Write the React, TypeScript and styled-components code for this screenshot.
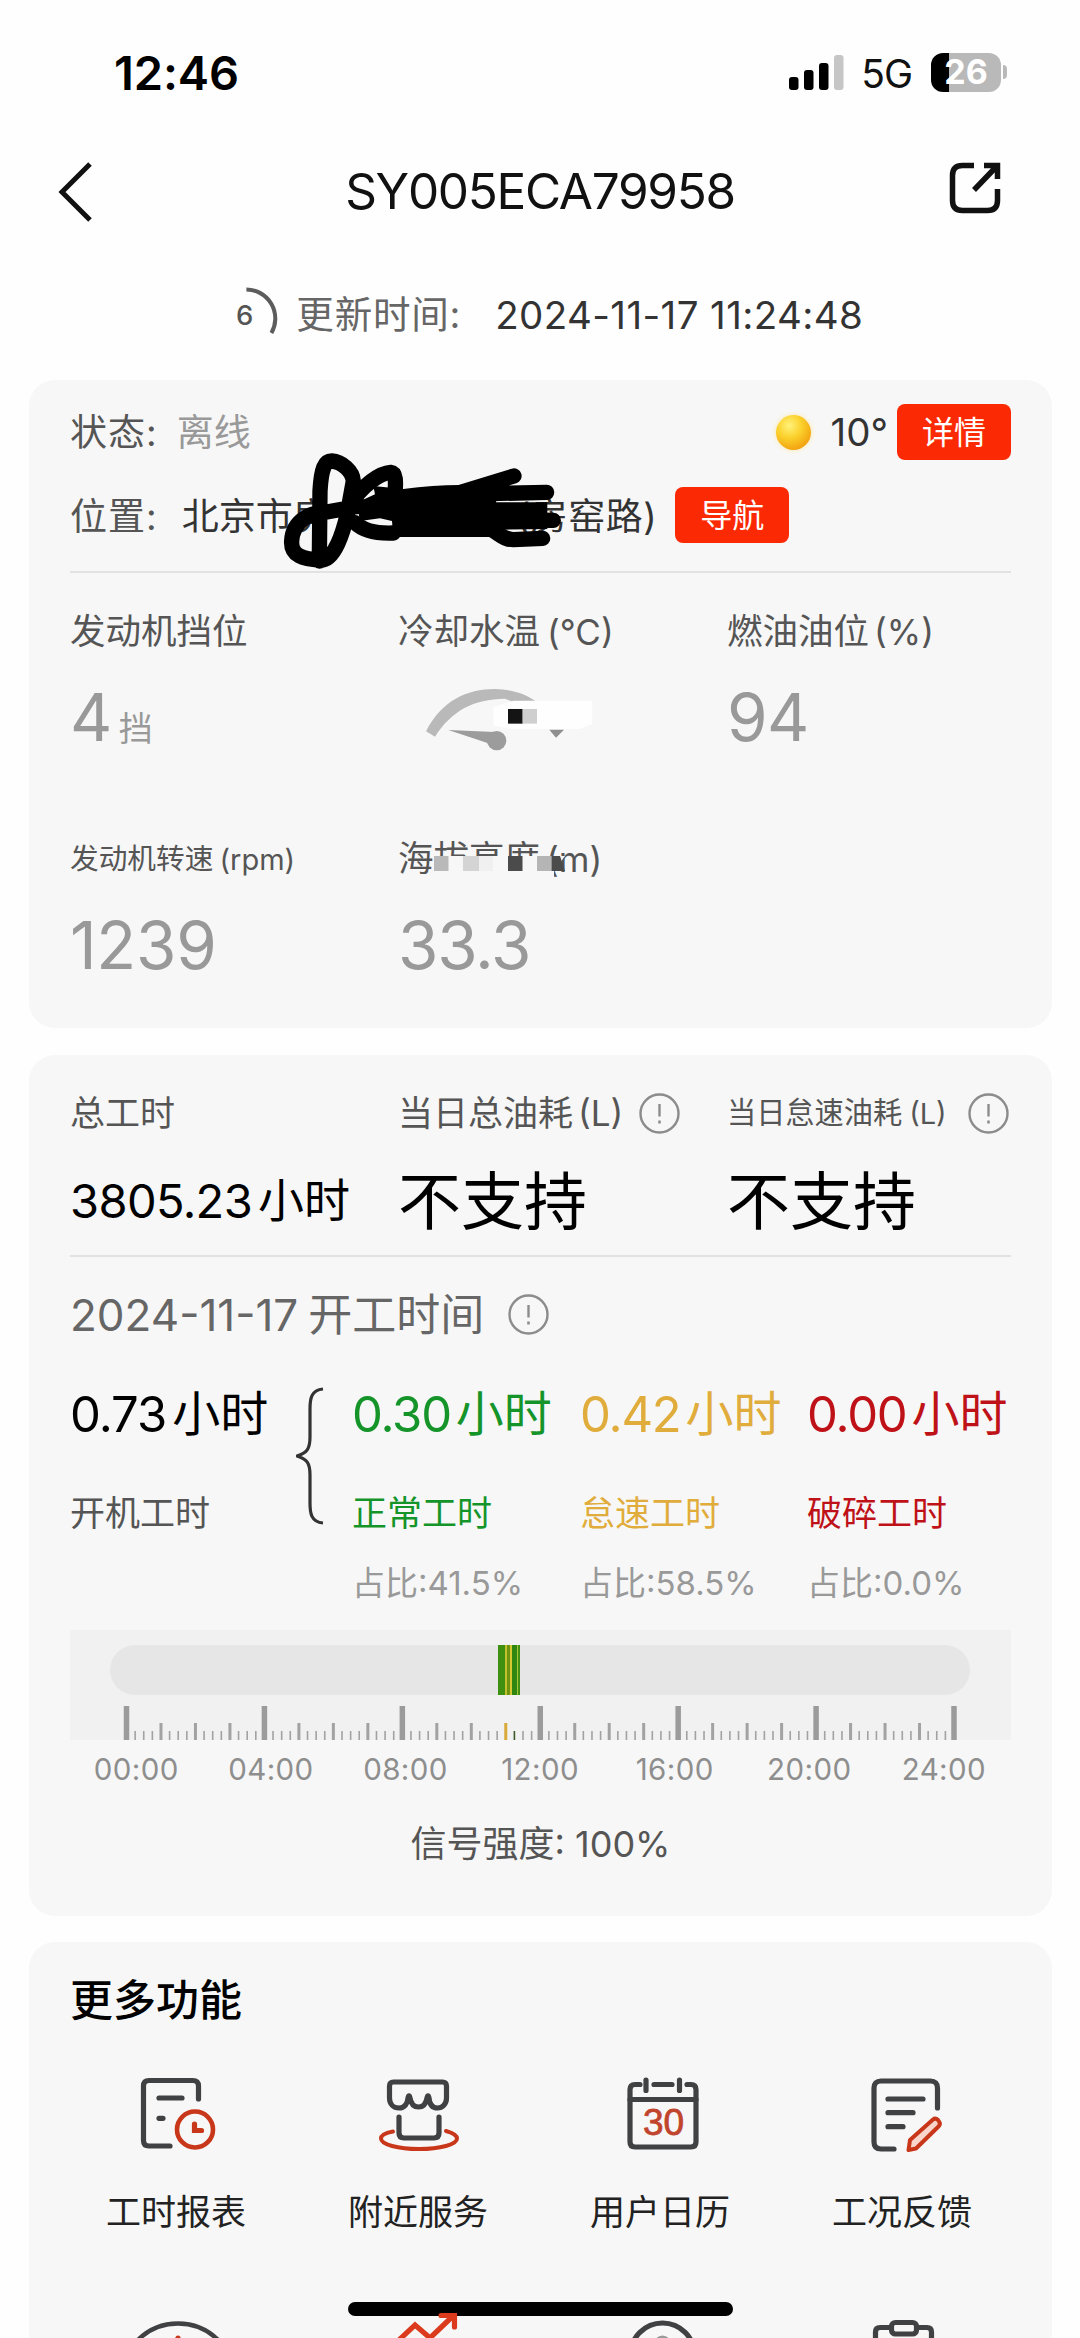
import React from 'react';
import styled, { createGlobalStyle } from 'styled-components';

const GlobalStyle = createGlobalStyle`
  *, *::before, *::after { box-sizing: border-box; }
  html, body { margin: 0; padding: 0; background: #fefefe; }
  body { font-family: Inter, "Noto Sans CJK SC", sans-serif; -webkit-font-smoothing: antialiased; }
`;

const Screen = styled.div`
  position: relative;
  width: 1080px;
  height: 2338px;
  overflow: hidden;
  background: #fefefe;
  display: flex;
  flex-direction: column;
`;

const Txt = styled.span<{ $s: number; $c?: string; $w?: number; $ls?: number; $ml?: number; $dy?: number }>`
  font-size: ${(p) => p.$s}px;
  line-height: 1;
  color: ${(p) => p.$c ?? '#555'};
  font-weight: ${(p) => p.$w ?? 400};
  letter-spacing: ${(p) => p.$ls ?? 0}px;
  margin-left: ${(p) => p.$ml ?? 0}px;
  padding-top: ${(p) => p.$dy ?? 0}px;
  white-space: nowrap;
`;

const Row = styled.div<{ $h: number; $mt?: number }>`
  display: flex;
  align-items: center;
  height: ${(p) => p.$h}px;
  margin-top: ${(p) => p.$mt ?? 0}px;
`;

const StatusBar = styled.header`
  flex: none;
  display: flex;
  align-items: center;
  justify-content: space-between;
  height: 144px;
  padding: 0 73px 0 114px;
`;

const StatusIcons = styled.div`
  display: flex;
  align-items: center;
`;

const Battery = styled.div`
  display: flex;
  align-items: center;
  justify-content: center;
  width: 70px;
  height: 39px;
  margin-left: 19px;
  border-radius: 12px;
  background: linear-gradient(90deg, #000 0 18px, #b9b9b9 18px);
`;

const BatteryCap = styled.div`
  width: 4px;
  height: 14px;
  margin-left: 2px;
  border-radius: 0 4px 4px 0;
  background: #b9b9b9;
`;

const NavBar = styled.nav`
  flex: none;
  display: flex;
  align-items: center;
  justify-content: space-between;
  height: 96px;
  padding: 0 78px 0 56px;
`;

const ShareSvg = styled.svg`
  margin-bottom: 9px;
`;

const UpdateBar = styled.div`
  flex: none;
  display: flex;
  align-items: center;
  height: 140px;
  padding: 10px 0 0 232px;
`;

const Countdown = styled.svg`
  overflow: visible;
`;

const Card = styled.section<{ $h: number; $pt: number; $mb?: number }>`
  flex: none;
  height: ${(p) => p.$h}px;
  margin: 0 28px ${(p) => p.$mb ?? 0}px 29px;
  padding: ${(p) => p.$pt}px 41px 0;
  border-radius: 26px;
  background: #f7f7f7;
`;

const LocationRow = styled(Row)`
  position: relative;
`;

const Scribble = styled.svg`
  position: absolute;
  left: 210px;
  top: -36px;
`;

const HiddenGap = styled.span`
  width: 187px;
`;

const Spacer = styled.span`
  flex: 1;
`;

const RedButton = styled.button<{ $ml: number }>`
  display: flex;
  align-items: center;
  justify-content: center;
  width: 114px;
  height: 56px;
  margin: 0 0 0 ${(p) => p.$ml}px;
  padding: 0;
  border: 0;
  border-radius: 8px;
  background: #fb2a05;
  font-family: inherit;
`;

const Sun = styled.span`
  width: 35px;
  height: 35px;
  margin-right: 20px;
  border-radius: 50%;
  background: radial-gradient(circle at 38% 30%, #fff27a 0, #fbd12c 38%, #f3a712 72%, #f08a1c 100%);
  box-shadow: 0 0 5px #ffe9a0;
`;

const Divider = styled.hr<{ $mt: number }>`
  height: 2px;
  margin: ${(p) => p.$mt}px 0 0;
  border: 0;
  background: #e2e2e2;
`;

const Metrics = styled.div<{ $mt: number }>`
  display: grid;
  grid-template-columns: 328px 329px 1fr;
  row-gap: 81px;
  margin-top: ${(p) => p.$mt}px;
`;

const Metric = styled.div<{ $gap: number }>`
  display: flex;
  flex-direction: column;
  gap: ${(p) => p.$gap}px;
`;

const LabelLine = styled.div`
  position: relative;
  display: flex;
  align-items: center;
  height: 50px;
`;

const ValueLine = styled.div`
  display: flex;
  align-items: center;
  height: 70px;
`;

const Mosaic = styled.svg`
  position: absolute;
  left: 36px;
  top: 22px;
`;

const Hours = styled.div`
  display: grid;
  grid-template-columns: 226px 56px 228px 227px 1fr;
  margin-top: 45px;
`;

const HoursCol = styled.div`
  display: flex;
  flex-direction: column;
  gap: 20px;
`;

const HoursValue = styled.div`
  display: flex;
  align-items: center;
  height: 60px;
  margin-bottom: 24px;
`;

const HoursLine = styled.div`
  display: flex;
  align-items: center;
  height: 50px;
`;

const Brace = styled.svg`
  margin-top: 3px;
`;

const Timeline = styled.div`
  display: flex;
  flex-direction: column;
  height: 110px;
  margin-top: 22px;
  padding: 15px 41px 0 40px;
  background: #f1f1f1;
`;

const Track = styled.div`
  flex: none;
  display: flex;
  height: 50px;
  padding-left: 388px;
  border-radius: 25px;
  background: #e6e6e6;
`;

const Segment = styled.span<{ $w: number; $c: string }>`
  width: ${(p) => p.$w}px;
  height: 50px;
  background: ${(p) => p.$c};
`;

const Ruler = styled.svg`
  display: block;
  margin-top: 11px;
`;

const TimeLabels = styled.div`
  display: grid;
  grid-template-columns: repeat(7, 134.6px);
  align-items: center;
  justify-items: center;
  height: 40px;
  margin: 10px 0 0 -1px;
`;

const Centered = styled(Row)`
  justify-content: center;
`;

const Functions = styled.div`
  display: grid;
  grid-template-columns: repeat(4, 242px);
  row-gap: 75px;
  margin: 45px 0 0 -15px;
`;

const FunctionItem = styled.div`
  display: flex;
  flex-direction: column;
  align-items: center;
  height: 167px;
`;

const FunctionLabel = styled.div`
  display: flex;
  align-items: center;
  height: 50px;
  margin-top: 27px;
`;

const Icon90 = styled.svg`
  position: relative;
  z-index: 2;
  flex: none;
  width: 90px;
  height: 90px;
  fill: none;
  stroke: #404143;
  stroke-width: 5.2;
  stroke-linecap: round;
  stroke-linejoin: round;
  overflow: visible;
`;

const HomeIndicator = styled.div`
  position: absolute;
  left: 348px;
  top: 2302px;
  width: 385px;
  height: 14px;
  border-radius: 7px;
  background: #000;
`;

const InlineSvg = styled.svg<{ $ml: number; $mt?: number }>`
  margin-left: ${(p) => p.$ml}px;
  margin-top: ${(p) => p.$mt ?? 0}px;
  flex: none;
`;

const RED = '#c8371a';

const Info = ({ ml }: { ml: number }) => (
  <InlineSvg $ml={ml} width="41" height="41" viewBox="0 0 41 41" fill="none" stroke="#8c8c8c">
    <circle cx="20.5" cy="20.5" r="19" strokeWidth="2.4" />
    <path d="M20.5 11v12.5" strokeWidth="2.4" />
    <path d="M20.5 27.5v3" strokeWidth="2.6" />
  </InlineSvg>
);

const MAJOR = 6;
const ticks = Array.from({ length: 24 * 4 + 1 }, (_, i) => i);

const TimeRuler = () => (
  <Ruler width="859" height="34" viewBox="0 0 859 34">
    {ticks.map((i) => {
      const x = 16.5 + (i * 827.5) / 96;
      const major = i % (96 / MAJOR) === 0;
      const hour = i % 4 === 0;
      const w = major ? 5.5 : hour ? 3 : 1.6;
      const h = major ? 34 : hour ? 17 : 9;
      const fill = i === 44 ? '#d9a93a' : i === 45 ? '#3d5a2c' : major ? '#9b9b9b' : '#a2a2a2';
      return <rect key={i} x={x - w / 2} y={34 - h} width={w} height={h} fill={fill} />;
    })}
  </Ruler>
);

const ReportIcon = () => (
  <Icon90 viewBox="0 0 90 90">
    <path d="M67.5 29V16q0-5.5-5.5-5.5H18q-5.5 0-5.5 5.5v54.5q0 5.5 5.5 5.5h21" />
    <path d="M28 28h23M28 48.3h4" />
    <g stroke={RED}>
      <circle cx="64" cy="59.5" r="18" strokeWidth="4.6" />
      <path d="M63.5 54v6.5h7" strokeLinejoin="miter" />
    </g>
  </Icon90>
);

const StoreIcon = () => (
  <Icon90 viewBox="0 0 90 90">
    <path d="M20 61.5C12 63 8 65.5 8 68.5c0 6 17 10.5 38 10.5s38-4.5 38-10.5c0-3-4-5.5-11-7.5" stroke={RED} strokeWidth="4" />
    <path d="M16.5 16q0-4 4-4h49q4 0 4 4v12c0 6-4 10-9 10-5.5 0-8-4-8.5-10-.5-3-1.5-3-2 0-1 6-3.5 9-8.5 9s-7.5-3-8.500-9c-.5-3-1.500-3-2 0-.5 6-3.500 10-9 10s-9.500-4-9.500-10z" />
    <path d="M26 47v16q0 5 5 5h30q5 0 5-5V47" />
  </Icon90>
);

const CalendarText = styled.text`
  font: 400 37px "Liberation Sans", sans-serif;
  fill: #c0452c;
  stroke: #c0452c;
  stroke-width: 0.8px;
  text-anchor: middle;
`;

const CalendarIcon = () => (
  <Icon90 viewBox="0 0 90 90">
    <path d="M25 14.5h-5q-5 0-5 5V72q0 5 5 5h56q5 0 5-5V19.500q0-5-5-5h-4M39 14.500h18" />
    <path d="M15 29.5h66M31 10v10.5M64.5 10v10.5" />
    <CalendarText x="48.5" y="65">30</CalendarText>
  </Icon90>
);

const FeedbackIcon = () => (
  <Icon90 viewBox="0 0 90 90">
    <path d="M80.5 38V18q0-7-7-7H24q-7 0-7 7v54q0 7 7 7h13" />
    <path d="M31 29h35M31 42.7h25M31 56.7h15" />
    <path d="M51.5 80l1.5-10 23-20.5q2.5-2 5 .5l1 1.5q2 2.5-.5 5L59 78.500z" stroke={RED} strokeWidth="4" fill="#f9d5cb" />
  </Icon90>
);

const GaugeIcon = () => (
  <Icon90 viewBox="0 0 90 90">
    <circle cx="47" cy="68.5" r="57" strokeWidth="4.4" />
    <path d="M47 26v12" stroke={RED} />
  </Icon90>
);

const TrendIcon = () => (
  <Icon90 viewBox="0 0 90 90">
    <path d="M26 28l16-15 15 13L80 4" stroke="#dc3a1c" strokeLinejoin="miter" />
    <path d="M68 3.5h13.5V15" stroke="#dc3a1c" strokeLinejoin="miter" />
  </Icon90>
);

const SearchIcon = () => (
  <Icon90 viewBox="0 0 90 90">
    <circle cx="47.5" cy="43" r="32" />
    <circle cx="47.5" cy="32" r="6" stroke="#999" />
  </Icon90>
);

const ClipboardIcon = () => (
  <Icon90 viewBox="0 0 90 90">
    <path d="M33 15.5H23q-4.5 0-4.5 4.5v50h56V20q0-4.5-4.5-4.500H61" />
    <rect x="34.5" y="10.5" width="25" height="11.5" rx="4" />
  </Icon90>
);

const functionItems = [
  { label: '工时报表', Icon: ReportIcon },
  { label: '附近服务', Icon: StoreIcon },
  { label: '用户日历', Icon: CalendarIcon },
  { label: '工况反馈', Icon: FeedbackIcon },
  { label: '', Icon: GaugeIcon },
  { label: '', Icon: TrendIcon },
  { label: '', Icon: SearchIcon },
  { label: '', Icon: ClipboardIcon },
];

const hourColumns = [
  { value: '0.30', name: '正常工时', ratio: '占比:41.5%', color: '#15942a' },
  { value: '0.42', name: '怠速工时', ratio: '占比:58.5%', color: '#e0ac3b' },
  { value: '0.00', name: '破碎工时', ratio: '占比:0.0%', color: '#bf1218' },
];

const times = ['00:00', '04:00', '08:00', '12:00', '16:00', '20:00', '24:00'];

export default function App() {
  return (
    <>
      <GlobalStyle />
      <Screen>
        <StatusBar>
          <Txt $s={47} $c="#000" $w={600} $ls={-0.1}>12:46</Txt>
          <StatusIcons>
            <svg width="55" height="35" viewBox="0 0 55 35">
              <rect x="0" y="22" width="9.5" height="13" rx="3" />
              <rect x="15" y="15" width="9.5" height="20" rx="3" />
              <rect x="30" y="8" width="9.5" height="27" rx="3" />
              <rect x="45" y="0" width="9.5" height="35" rx="3" fill="#c6c6c6" />
            </svg>
            <Txt $s={39} $c="#111" $ml={17} $dy={2} $ls={-1}>5G</Txt>
            <Battery><Txt $s={34} $c="#fff" $w={700}>26</Txt></Battery>
            <BatteryCap />
          </StatusIcons>
        </StatusBar>

        <NavBar>
          <svg width="38" height="60" viewBox="0 0 38 60" fill="none" stroke="#111" strokeWidth="5">
            <path d="M34 2L6 30l28 28" />
          </svg>
          <Txt $s={49.5} $c="#111" $ls={-1.3} $ml={38}>SY005ECA79958</Txt>
          <ShareSvg width="54" height="54" viewBox="0 0 54 54" fill="none" stroke="#111" strokeWidth="5.5">
            <path d="M26 4.5H14.5q-10 0-10 10v25q0 10 10 10h25q10 0 10-10V28" />
            <path d="M36 4.500h13.500V18M49.500 4.500L26 29" />
          </ShareSvg>
        </NavBar>

        <UpdateBar>
          <Txt $s={27.5} $c="#555" $w={500} $ml={4} $dy={2}>6</Txt>
          <Countdown width="28" height="48" viewBox="0 0 28 48" fill="none" stroke="#5c5c5c" strokeWidth="4">
            <path d="M-6.6 -1.5A29 29 0 0 1 18.4 42" />
          </Countdown>
          <Txt $s={37.5} $c="#666" $ml={15} $ls={0.8}>更新时间:</Txt>
          <Txt $s={38.5} $c="#333" $ml={34} $ls={0.4}>2024-11-17 11:24:48</Txt>
        </UpdateBar>

        <Card $h={648} $pt={24} $mb={27}>
          <Row $h={56}>
            <Txt $s={37} $c="#555" $ls={1}>状态:</Txt>
            <Txt $s={37} $c="#999" $ml={19}>离线</Txt>
            <Spacer />
            <Sun />
            <Txt $s={38.5} $c="#333">10°</Txt>
            <RedButton $ml={9}><Txt $s={32} $c="#fff" $dy={1}>详情</Txt></RedButton>
          </Row>
          <LocationRow $h={56} $mt={27}>
            <Txt $s={37} $c="#555" $ls={1} $dy={2}>位置:</Txt>
            <Txt $s={37} $c="#333" $ml={24} $dy={2}>北京市房</Txt>
            <HiddenGap />
            <Txt $s={37} $c="#333" $ls={0.5} $dy={2}>(房窑路)</Txt>
            <RedButton $ml={18}><Txt $s={32} $c="#fff" $dy={1}>导航</Txt></RedButton>
            <Scribble width="283.300" height="120" viewBox="60 60 850 360" fill="none" stroke="#000" strokeWidth="46" strokeLinecap="round" strokeLinejoin="round">
              <path d="M178 390L180 180C184 110 195 90 215 90C245 92 278 120 280 150L262 250C250 300 225 388 182 388C130 384 92 375 95 330C98 270 150 243 200 243L300 225" />
              <path d="M270 220C310 160 360 126 392 124C408 126 408 150 405 190" />
              <path d="M285 275C310 300 350 308 400 306" />
              <path d="M320 232L400 200L430 205" strokeWidth="50" />
              <path d="M600 185L762 135M600 190L860 184M640 265L880 268M670 285C715 300 725 326 760 326L848 322" />
              <path d="M345 190L340 165L430 174Q520 162 600 162L722 164L708 214L862 214V294L728 296L700 318H400L396 270L360 262L300 270L290 215Z" stroke="none" fill="#000" />
            </Scribble>
          </LocationRow>
          <Divider $mt={28} />
          <Metrics $mt={34}>
            <Metric $gap={26}>
              <LabelLine><Txt $s={35.5}>发动机挡位</Txt></LabelLine>
              <ValueLine>
                <Txt $s={65.5} $c="#999" $w={400} $ls={-0.5}>4</Txt>
                <Txt $s={34} $c="#999" $ml={7} $dy={22}>挡</Txt>
              </ValueLine>
            </Metric>
            <Metric $gap={26}>
              <LabelLine><Txt $s={35.5}>冷却水温</Txt><Txt $s={35} $ml={7}>(°C)</Txt></LabelLine>
              <ValueLine>
                <InlineSvg $ml={22} $mt={5} width="180" height="73.3" viewBox="120 70 540 220">
                  <path d="M138 212C185 120 260 85 345 85C395 87 435 98 467 122L400 124L375 114C280 115 215 150 165 228Z" fill="#b9b9b9" />
                  <path d="M400 120H637V190L600 205H400L340 195V140Z" fill="#fefefe" />
                  <rect x="384" y="145" width="44" height="44" fill="#141414" />
                  <rect x="428" y="145" width="43" height="44" fill="#cfcfcf" />
                  <path d="M205 208L345 214V262L320 246Z" fill="#9c9c9c" />
                  <circle cx="350" cy="240" r="29" fill="#9c9c9c" />
                  <path d="M508 207H552L528 231Z" fill="#8f8f8f" />
                </InlineSvg>
              </ValueLine>
            </Metric>
            <Metric $gap={26}>
              <LabelLine><Txt $s={35.5}>燃油油位</Txt><Txt $s={35} $ml={5}>(%)</Txt></LabelLine>
              <ValueLine><Txt $s={65.5} $c="#999" $w={400} $ls={-0.5}>94</Txt></ValueLine>
            </Metric>
            <Metric $gap={27}>
              <LabelLine><Txt $s={28.7}>发动机转速</Txt><Txt $s={29} $ml={6}>(rpm)</Txt></LabelLine>
              <ValueLine><Txt $s={65.5} $c="#999" $w={400} $ls={-0.3}>1239</Txt></ValueLine>
            </Metric>
            <Metric $gap={27}>
              <LabelLine>
                <Txt $s={35.5}>海拔高度</Txt><Txt $s={35} $ml={6}>(m)</Txt>
                <Mosaic width="132" height="26" viewBox="0 0 132 26">
                  <path d="M0 0H131L120 15V26H0Z" fill="#f7f7f7" />
                  <rect width="14.500" height="15" fill="#b9b9b9" />
                  <rect x="29" width="16" height="15" fill="#d4d4d4" />
                  <rect x="45" width="14" height="15" fill="#f0f0f0" />
                  <rect x="74" width="14.500" height="15" fill="#4b4b4b" />
                  <rect x="103" width="14.500" height="15" fill="#b5b5b5" />
                  <path d="M117.500 0H126L131 15H117.500Z" fill="#4b4b4b" />
                </Mosaic>
              </LabelLine>
              <ValueLine><Txt $s={65.5} $c="#999" $w={400} $ls={-1.200}>33.3</Txt></ValueLine>
            </Metric>
          </Metrics>
        </Card>

        <Card $h={861} $pt={33} $mb={26}>
          <Metrics $mt={0}>
            <Metric $gap={27}>
              <LabelLine><Txt $s={35}>总工时</Txt></LabelLine>
              <ValueLine><Txt $s={47} $c="#000" $ls={-0.6}>3805.23</Txt><Txt $s={46} $c="#000" $ml={6}>小时</Txt></ValueLine>
            </Metric>
            <Metric $gap={28}>
              <LabelLine><Txt $s={35}>当日总油耗</Txt><Txt $s={35} $ml={5}>(L)</Txt><Info ml={16} /></LabelLine>
              <ValueLine><Txt $s={63} $c="#000">不支持</Txt></ValueLine>
            </Metric>
            <Metric $gap={28}>
              <LabelLine><Txt $s={29.200}>当日怠速油耗</Txt><Txt $s={29} $ml={7}>(L)</Txt><Info ml={21} /></LabelLine>
              <ValueLine><Txt $s={63} $c="#000">不支持</Txt></ValueLine>
            </Metric>
          </Metrics>
          <Divider $mt={19} />
          <Row $h={50} $mt={32}>
            <Txt $s={44} $c="#666" $dy={1}>2024-11-17</Txt>
            <Txt $s={44} $c="#666" $ml={10} $dy={1}>开工时间</Txt>
            <Info ml={24} />
          </Row>
          <Hours>
            <HoursCol>
              <HoursValue><Txt $s={49} $c="#000" $ls={-1}>0.73</Txt><Txt $s={48} $c="#000" $ml={6}>小时</Txt></HoursValue>
              <HoursLine><Txt $s={35}>开机工时</Txt></HoursLine>
            </HoursCol>
            <Brace width="28" height="138" viewBox="0 0 28 138" fill="none" stroke="#333" strokeWidth="3.200">
              <path d="M27 2C15 3 14 12 14 22V50C14 62 11 66 1 69C11 72 14 76 14 88V116C14 126 15 135 27 136" />
            </Brace>
            {hourColumns.map((h) => (
              <HoursCol key={h.name}>
                <HoursValue><Txt $s={49} $c={h.color} $ls={-1.2}>{h.value}</Txt><Txt $s={48} $c={h.color} $ml={5}>小时</Txt></HoursValue>
                <HoursLine><Txt $s={35} $c={h.color} $dy={1}>{h.name}</Txt></HoursLine>
                <HoursLine><Txt $s={33} $c="#999">{h.ratio}</Txt></HoursLine>
              </HoursCol>
            ))}
          </Hours>
          <Timeline>
            <Track>
              <Segment $w={7} $c="#3f8f10" />
              <Segment $w={2} $c="#c3c02c" />
              <Segment $w={3} $c="#6f9410" />
              <Segment $w={2} $c="#d5c832" />
              <Segment $w={5} $c="#2f8610" />
              <Segment $w={1} $c="#a8c43c" />
              <Segment $w={2} $c="#3f8f10" />
            </Track>
            <TimeRuler />
          </Timeline>
          <TimeLabels>
            {times.map((t) => <Txt key={t} $s={29.500} $c="#8e8e8e" $ls={0.4}>{t}</Txt>)}
          </TimeLabels>
          <Centered $h={50} $mt={29}>
            <Txt $s={36} $c="#555">信号强度: 100%</Txt>
          </Centered>
        </Card>

        <Card $h={460} $pt={33}>
          <Row $h={50}><Txt $s={43} $c="#000" $w={500}>更多功能</Txt></Row>
          <Functions>
            {functionItems.map(({ label, Icon }, i) => (
              <FunctionItem key={i}>
                <Icon />
                <FunctionLabel><Txt $s={35} $c="#222">{label}</Txt></FunctionLabel>
              </FunctionItem>
            ))}
          </Functions>
        </Card>
        <HomeIndicator />
      </Screen>
    </>
  );
}
